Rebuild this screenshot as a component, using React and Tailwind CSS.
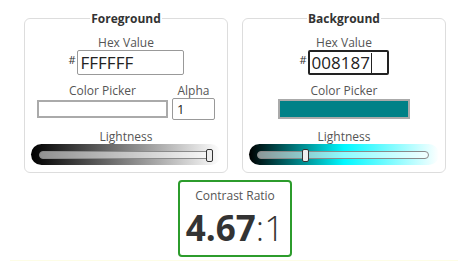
import React from 'react';

const labelCls = "text-[12px] leading-[15px] text-[#555]";

const Slider = ({ gradient, pos }) => (
  <div className="w-[190px] h-[21px] rounded-full mx-auto flex items-center pl-[8px] pr-[10px]" style={{ background: gradient }}>
    <div className="relative w-full h-[8px] rounded-full border border-[#8a8a8a] bg-white/55">
      <div
        className="absolute top-[-3px] w-[7px] h-[13px] rounded-[2px] border border-[#333] bg-[#eee]"
        style={{ left: `calc(${pos}% - 4px)` }}
      />
    </div>
  </div>
);

const Panel = ({ title, children }) => (
  <fieldset className="w-[204px] border border-[#ddd] rounded-[6px] pb-[7px]">
    <legend className="mx-auto px-[1px] text-[12px] leading-[15px] font-bold text-[#333]">{title}</legend>
    {children}
  </fieldset>
);

const HexField = ({ value, width, focused }) => (
  <div className="flex flex-col items-center mt-[9px]">
    <div className={labelCls}>Hex Value</div>
    <div className="flex items-start">
      <span className="text-[11px] leading-none text-[#333] mt-[4px] mr-[1px]">#</span>
      <div
        className={
          focused
            ? "h-[25px] border-2 border-[#222] rounded-[2px] flex items-center pl-[2px] text-[17px] text-[#222]"
            : "h-[25px] border border-[#999] rounded-[2px] flex items-center pl-[3px] text-[17px] text-[#222]"
        }
        style={{ width }}
      >
        {value}
        {focused && <span className="w-px h-[20px] bg-[#222] ml-[1px]" />}
      </div>
    </div>
  </div>
);

export default function App() {
  return (
    <div className="w-[458px] h-[261px] overflow-hidden bg-white font-['Open_Sans',sans-serif] pt-[11px]">
      <div className="pl-[24px] w-[446px]">
        <div className="flex gap-[14px]">
          <Panel title="Foreground">
            <HexField value="FFFFFF" width="107px" />
            <div className="flex justify-center gap-[4px] mt-[8px]">
              <div className="flex flex-col items-center">
                <div className={labelCls}>Color Picker</div>
                <div className="h-[22px] flex items-center">
                  <div className="w-[131px] h-[18px] border-2 border-[#aaa] bg-white" />
                </div>
              </div>
              <div className="flex flex-col items-center">
                <div className={labelCls}>Alpha</div>
                <div className="w-[43px] h-[22px] border border-[#999] rounded-[2px] pl-[4px] text-[13px] leading-[20px] text-[#222]">1</div>
              </div>
            </div>
            <div className="flex flex-col items-center mt-[9px]">
              <div className={labelCls}>Lightness</div>
              <Slider gradient="linear-gradient(to right, #000, #fff)" pos={100} />
            </div>
          </Panel>
          <Panel title="Background">
            <HexField value="008187" width="81px" focused />
            <div className="flex flex-col items-center mt-[8px]">
              <div className={labelCls}>Color Picker</div>
              <div className="h-[22px] flex items-center">
                <div className="w-[132px] h-[20px] border-2 border-[#aaa] bg-[#008187]" />
              </div>
            </div>
            <div className="flex flex-col items-center mt-[9px]">
              <div className={labelCls}>Lightness</div>
              <Slider gradient="linear-gradient(to right, #000, #00f8ff 50%, #fff)" pos={28} />
            </div>
          </Panel>
        </div>
        <div className="flex justify-center mt-[7px]">
          <div className="w-[114px] h-[77px] border-2 border-[#2c9c2c] rounded-[4px] flex flex-col items-center pt-[6px]">
            <div className={labelCls}>Contrast Ratio</div>
            <div className="mt-[7px] text-[35px] leading-[35px] text-[#333]">
              <span className="font-bold">4.67</span>
              <span className="font-light">:1</span>
            </div>
          </div>
        </div>
      </div>
      <div className="ml-[10px] mt-[3px] h-[10px] bg-[#fdfde6]" />
    </div>
  );
}
